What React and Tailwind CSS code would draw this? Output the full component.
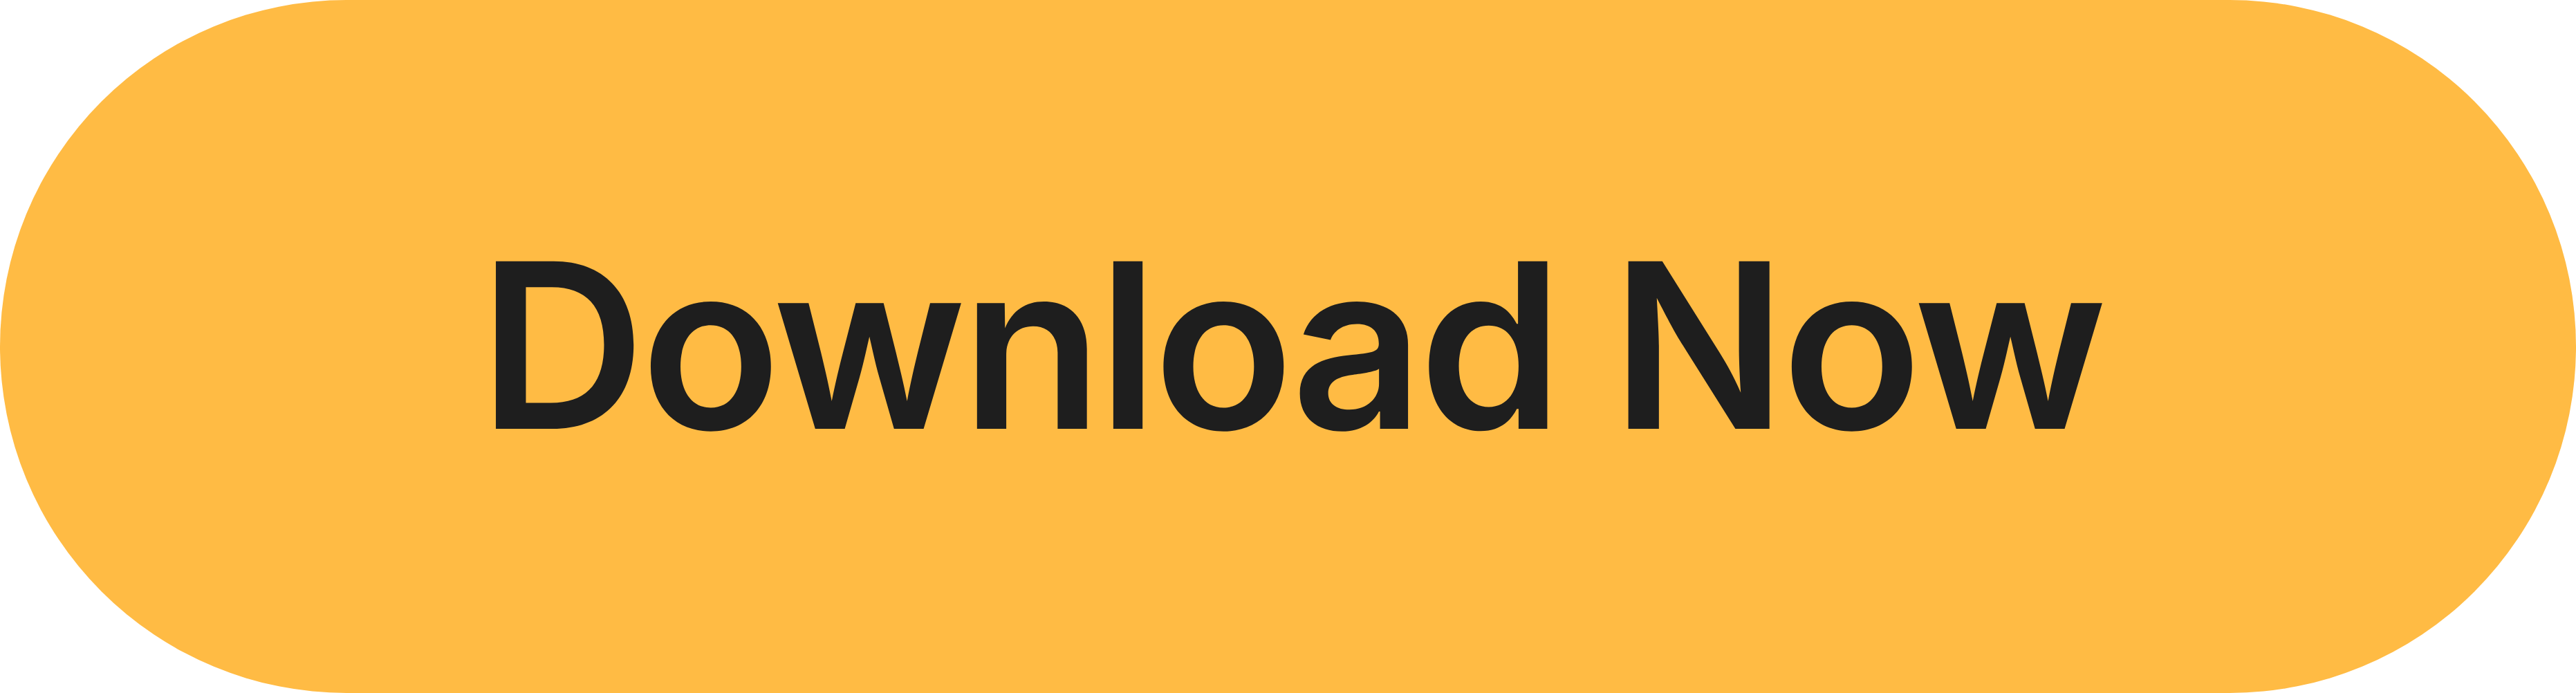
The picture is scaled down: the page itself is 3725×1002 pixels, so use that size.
export default function App() {
    return (
        <div className="w-[3725px] h-[1002px] bg-white">
            <div className="flex h-full w-full items-center justify-center rounded-full bg-[#ffbb44] pb-[6px] pl-[8px]">
                <span className="font-['Inter',sans-serif] text-[333px] font-semibold leading-none tracking-[-0.02em] text-[#1e1e1e] whitespace-nowrap">
                    Download Now
                </span>
            </div>
        </div>
    );
}
